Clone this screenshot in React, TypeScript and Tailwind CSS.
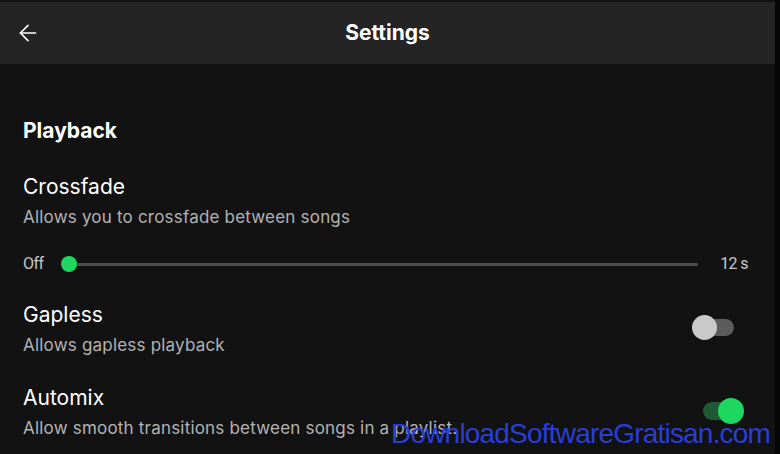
import { ArrowLeft } from 'lucide-react';

function Toggle({ on }: { on: boolean }) {
    return (
        <div className="relative w-[52px] h-[26px] shrink-0 mb-[4px]">
            <div
                className={
                    on
                        ? 'absolute left-[11px] right-[4px] top-[4px] h-[18px] rounded-full bg-[#1f5a34]'
                        : 'absolute left-[8px] right-[10px] top-[4px] h-[17px] rounded-full bg-[#5b5b5b]'
                }
            />
            <div
                className={
                    on
                        ? 'absolute right-0 top-0 w-[26px] h-[26px] rounded-full bg-[#1ed760]'
                        : 'absolute left-0 top-0 w-[25px] h-[25px] rounded-full bg-[#c9c9c9]'
                }
            />
        </div>
    );
}

function SettingRow({ title, desc, on }: { title: string; desc: string; on: boolean }) {
    return (
        <div className="flex items-center justify-between pr-[31px]">
            <div className="flex flex-col">
                <span className="text-[21px] leading-[30px] text-white">{title}</span>
                <span className="text-[17px] leading-[30px] text-[#b3b3b3] tracking-[0.2px]">{desc}</span>
            </div>
            <Toggle on={on} />
        </div>
    );
}

export default function App() {
    return (
        <div
            className="relative w-[780px] h-[454px] overflow-hidden bg-[#121212] flex"
            style={{ fontFamily: 'Inter, "Noto Sans", sans-serif' }}
        >
            <div className="flex-1 flex flex-col">
                <header className="mt-[2px] h-[62px] bg-[#242424] flex items-center relative shrink-0">
                    <ArrowLeft className="ml-[15px] text-white" size={26} strokeWidth={1.5} />
                    <span className="absolute left-0 right-0 text-center text-[21px] font-bold text-white">
                        Settings
                    </span>
                </header>

                <div className="pl-[23px] pt-[52px] flex flex-col">
                    <h2 className="text-[21px] leading-[30px] font-bold text-white">Playback</h2>

                    <div className="mt-[26px] flex flex-col">
                        <span className="text-[21px] leading-[30px] text-white">Crossfade</span>
                        <span className="text-[17px] leading-[30px] text-[#b3b3b3] tracking-[0.2px]">
                            Allows you to crossfade between songs
                        </span>
                    </div>

                    {/* crossfade slider, thumb sits at "Off" */}
                    <div className="mt-[22px] flex items-center h-[20px] pr-[27px]">
                        <span
                            className="text-[16px] text-[#c8c8c8] w-[46px] tracking-[-0.5px]"
                            style={{ fontFamily: 'Roboto, sans-serif' }}
                        >
                            Off
                        </span>
                        <div className="relative flex-1 h-[3px] bg-[#4e4e4e] rounded-full">
                            <div className="absolute -left-[8px] -top-[6.5px] w-[16px] h-[16px] rounded-full bg-[#1ed760]" />
                        </div>
                        <span
                            className="ml-[22px] text-[16px] text-[#c8c8c8] tracking-[-0.6px]"
                            style={{ fontFamily: 'Roboto, sans-serif' }}
                        >
                            12 s
                        </span>
                    </div>

                    <div className="mt-[26px] flex flex-col gap-[23px]">
                        <SettingRow title="Gapless" desc="Allows gapless playback" on={false} />
                        <SettingRow
                            title="Automix"
                            desc="Allow smooth transitions between songs in a playlist."
                            on={true}
                        />
                    </div>
                </div>
            </div>
            <div className="w-[5px] bg-[#050505] shrink-0" />

            {/* watermark over the screenshot */}
            <span
                className="absolute left-[391px] top-[418px] text-[28px] leading-[32px] text-[#2a3ed6] tracking-[-0.8px]"
                style={{ fontFamily: '"Liberation Sans", Arial, sans-serif' }}
            >
                DownloadSoftwareGratisan.com
            </span>
        </div>
    );
}
